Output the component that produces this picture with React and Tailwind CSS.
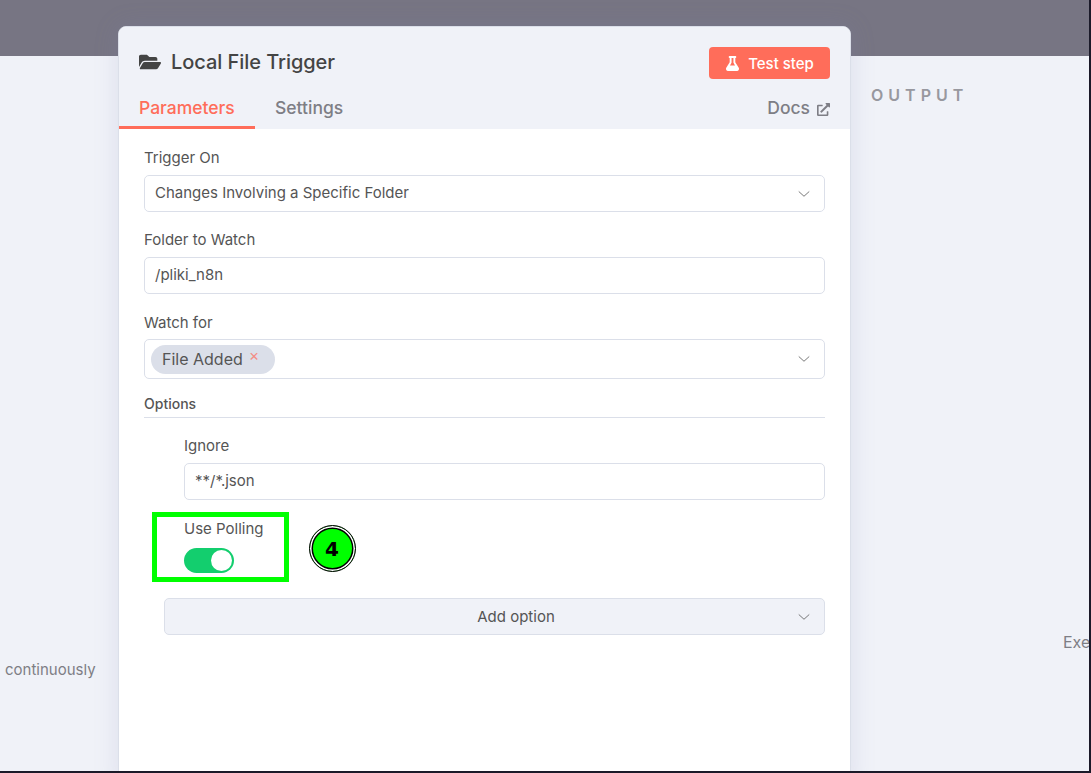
import { FaFolderOpen, FaFlask, FaExternalLinkAlt } from "react-icons/fa";
import { ChevronDown } from "lucide-react";

// Champ texte ou select du formulaire
function Field({ label, value, select, valueClass = "-mt-px", className = "" }) {
  return (
    <div className={className}>
      <label className="block text-[15px] leading-[20px] text-[#555] mb-[7px]">{label}</label>
      <div className="h-[37px] flex items-center justify-between bg-white border border-[#dbdfe9] rounded-[5px] pl-[10px] pr-[11px] text-[15px] text-[#555]">
        <span className={valueClass}>{value}</span>
        {select && <ChevronDown size={18} strokeWidth={1} className="text-[#555] scale-x-110" />}
      </div>
    </div>
  );
}

export default function App() {
  return (
    <div className="relative w-[1091px] h-[773px] overflow-hidden bg-[#1b1a29] font-['Inter',sans-serif]">
      <div className="relative w-[1089px] h-[771px] bg-[#f0f2f8] overflow-hidden">
        <div className="h-[56px] bg-[#777583]"></div>

        {/* Fond de la page derrière le panneau */}
        <p className="absolute left-[871px] top-[85px] text-[16px] leading-[20px] font-semibold tracking-[5px] text-[#98989f]">OUTPUT</p>
        <p className="absolute left-[5px] top-[661px] text-[15px] leading-[18px] text-[#7e7e85]">continuously</p>
        <p className="absolute left-[1063px] top-[632px] text-[16px] leading-[20px] text-[#7e7e85]">Execute</p>

        {/* Panneau du noeud */}
        <div className="absolute left-[118px] top-[26px] w-[733px] h-[760px] bg-white border border-[#dbdfe9] rounded-t-[8px] shadow-[0_0_24px_rgba(120,125,180,0.18)] overflow-hidden">
          <div className="bg-[#f0f2f8] h-[102px] flex flex-col">
            <div className="flex items-start justify-between pl-[20px] pr-[20px] pt-[20px]">
              <div className="flex items-center gap-[10px] h-[30px]">
                <FaFolderOpen size={22} className="text-[#444]" />
                <span className="text-[20px] leading-[30px] font-medium tracking-[-0.06px] text-[#444]">Local File Trigger</span>
              </div>
              <button className="h-[32px] w-[121px] flex items-center justify-center gap-[8px] rounded-[4px] bg-[#ff6d5a] text-white text-[15px] font-medium">
                <FaFlask size={15} />
                <span className="mt-[2px]">Test step</span>
              </button>
            </div>
            <div className="mt-auto flex items-end justify-between pr-[20px]">
              <div className="flex items-end">
                <div className="w-[136px] h-[33px] pl-[20px] text-[17.5px] leading-[24px] font-medium text-[#ff6d5a] border-b-[3px] border-[#ff6d5a]">Parameters</div>
                <div className="ml-[20px] h-[33px] text-[17.5px] leading-[24px] font-medium text-[#7e7e85]">Settings</div>
              </div>
              <div className="h-[33px] flex items-start gap-[7px] text-[17.5px] leading-[24px] font-medium text-[#7e7e85]">
                Docs
                <FaExternalLinkAlt size={13} className="mt-[7px]" />
              </div>
            </div>
          </div>

          <div className="px-[25px] pt-[19px]">
            <Field label="Trigger On" value="Changes Involving a Specific Folder" select />
            <Field label="Folder to Watch" value="/pliki_n8n" className="mt-[18px]" />

            <div className="mt-[19px]">
              <label className="block text-[15px] leading-[20px] text-[#555] mb-[6px]">Watch for</label>
              <div className="h-[40px] flex items-center justify-between bg-white border border-[#dbdfe9] rounded-[5px] pl-[6px] pr-[11px]">
                <span className="h-[29px] w-[124px] flex items-center pl-[11px] rounded-full bg-[#dbdfe9] text-[16px] text-[#555]">
                  File Added
                  <span className="ml-[6px] -mt-[8px] text-[16px] leading-none text-[#ff6d5a] opacity-70">×</span>
                </span>
                <ChevronDown size={18} strokeWidth={1} className="text-[#555] scale-x-110" />
              </div>
            </div>

            <div className="mt-[15px] h-[24px] border-b border-[#dbdfe9] text-[14px] leading-[20px] font-medium text-[#555]">Options</div>

            <Field label="Ignore" value="**/*.json" valueClass="" className="ml-[40px] mt-[18px]" />

            <div className="mt-[12px] flex items-start">
              <div className="ml-[8px] w-[137px] h-[70px] border-[5px] border-[#00ff00] pl-[27px] pt-[2px]">
                <div className="text-[15px] leading-[20px] text-[#555]">Use Polling</div>
                <div className="mt-[9px] w-[50px] h-[25px] rounded-full bg-[#13ce6e] flex items-center justify-end pr-[2px]">
                  <div className="w-[21px] h-[21px] rounded-full bg-white"></div>
                </div>
              </div>
              <div className="ml-[20px] mt-[13px] w-[47px] h-[47px] rounded-full bg-[#00ff00] border-[1.5px] border-black shadow-[inset_0_0_0_1.5px_white,inset_0_0_0_3px_black] flex items-center justify-center pr-px text-[20px] font-bold text-black font-['DejaVu_Sans',sans-serif]">4</div>
            </div>

            <div className="ml-[20px] mt-[16px] h-[37px] relative flex items-center justify-center pl-[43px] rounded-[5px] border border-[#dbdfe9] bg-[#f0f2f8] text-[15px] text-[#555]">
              <span className="mt-px">Add option</span>
              <ChevronDown size={18} strokeWidth={1} className="absolute right-[11px] text-[#555] scale-x-110" />
            </div>
          </div>
        </div>
      </div>
    </div>
  );
}
